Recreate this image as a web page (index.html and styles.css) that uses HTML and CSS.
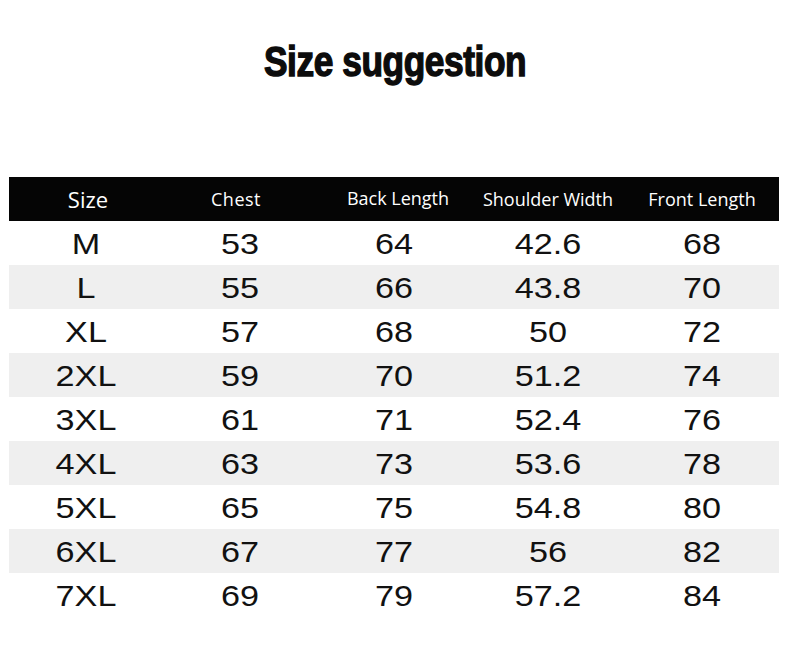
FILE: index.html
```html
<!DOCTYPE html>
<html>
<head>
<meta charset="utf-8">
<link rel="stylesheet" href="styles.css">
</head>
<body>
<div class="page">
  <h1 class="title"><span class="title-text">Size suggestion</span></h1>
  <div class="table">
    <div class="row head">
      <div class="cell size">Size</div>
      <div class="cell chest">Chest</div>
      <div class="cell up">Back Length</div>
      <div class="cell">Shoulder Width</div>
      <div class="cell">Front Length</div>
    </div>
    <div class="row"><div class="cell">M</div><div class="cell">53</div><div class="cell">64</div><div class="cell">42.6</div><div class="cell">68</div></div>
    <div class="row alt"><div class="cell">L</div><div class="cell">55</div><div class="cell">66</div><div class="cell">43.8</div><div class="cell">70</div></div>
    <div class="row"><div class="cell">XL</div><div class="cell">57</div><div class="cell">68</div><div class="cell">50</div><div class="cell">72</div></div>
    <div class="row alt"><div class="cell">2XL</div><div class="cell">59</div><div class="cell">70</div><div class="cell">51.2</div><div class="cell">74</div></div>
    <div class="row"><div class="cell">3XL</div><div class="cell">61</div><div class="cell">71</div><div class="cell">52.4</div><div class="cell">76</div></div>
    <div class="row alt"><div class="cell">4XL</div><div class="cell">63</div><div class="cell">73</div><div class="cell">53.6</div><div class="cell">78</div></div>
    <div class="row"><div class="cell">5XL</div><div class="cell">65</div><div class="cell">75</div><div class="cell">54.8</div><div class="cell">80</div></div>
    <div class="row alt"><div class="cell">6XL</div><div class="cell">67</div><div class="cell">77</div><div class="cell">56</div><div class="cell">82</div></div>
    <div class="row"><div class="cell">7XL</div><div class="cell">69</div><div class="cell">79</div><div class="cell">57.2</div><div class="cell">84</div></div>
  </div>
</div>
</body>
</html>
```

FILE: styles.css
```css
html, body {
  margin: 0;
  padding: 0;
  background: #ffffff;
}
.page {
  width: 790px;
  height: 645px;
  display: flex;
  flex-direction: column;
  align-items: center;
}
.title {
  margin: 0;
  padding-top: 37px;
  height: 50px;
  line-height: 50px;
  font-family: "Liberation Sans", Arial, sans-serif;
  font-weight: 700;
  font-size: 42px;
  color: #0c0c0c;
  text-align: center;
}
.title-text {
  display: inline-block;
  transform: scaleX(0.84);
  letter-spacing: -0.5px;
  -webkit-text-stroke: 1.4px #0c0c0c;
}
.table {
  margin-top: 90px;
  width: 770px;
  margin-left: -2px;
}
.row {
  display: grid;
  grid-template-columns: repeat(5, 1fr);
  height: 44px;
  align-items: center;
  font-family: "Liberation Sans", Arial, sans-serif;
  font-size: 30px;
  color: #111111;
  padding-top: 2px;
  box-sizing: border-box;
}
.row .cell {
  transform: scaleX(1.14);
}
.row.alt {
  background: #efefef;
}
.row.head {
  background: #050505;
  color: #ffffff;
  font-family: "Open Sans", "Noto Sans", sans-serif;
  font-size: 18px;
  padding-top: 0;
}
.row.head .cell {
  transform: none;
}
.cell {
  text-align: center;
}
.head .size {
  font-size: 22px;
  padding-left: 4px;
}
.head .chest {
  padding-right: 8px;
  letter-spacing: 0.5px;
}
.head .up {
  margin-top: -3px;
  padding-left: 8px;
}
```
